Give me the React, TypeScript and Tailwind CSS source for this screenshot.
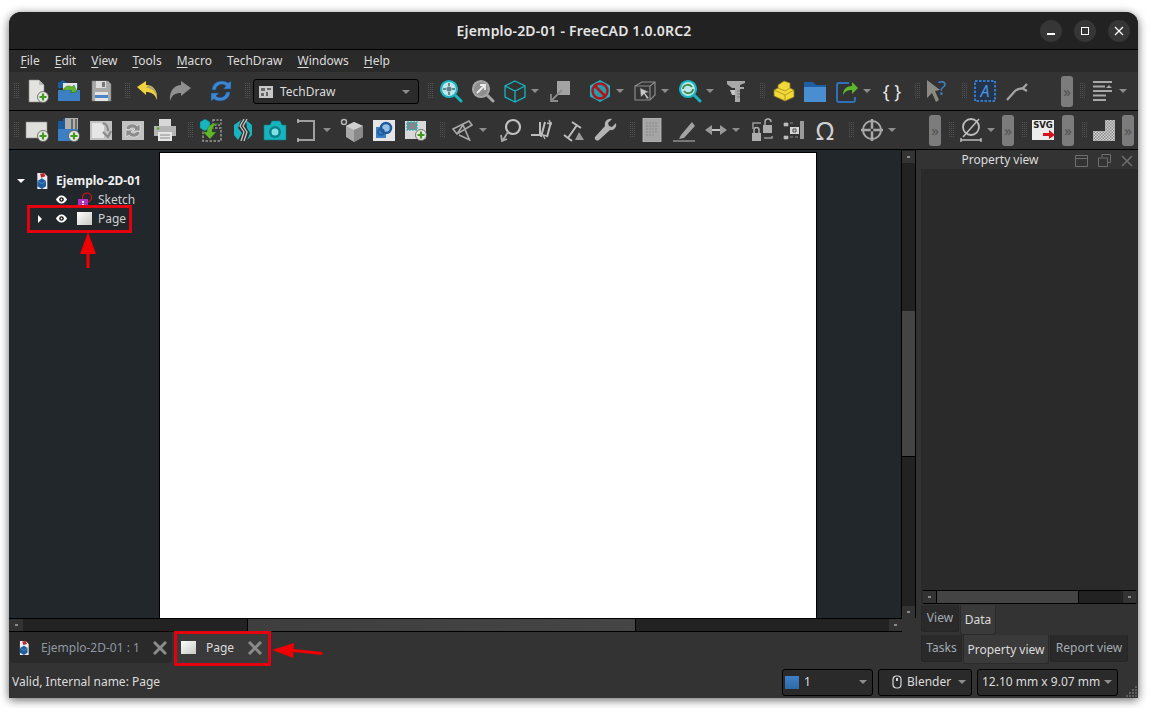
import type { ReactNode } from "react";

const Svg = ({ children, size = 24 }: { children: ReactNode; size?: number }) => (
  <svg width={size} height={size} viewBox="0 0 24 24" fill="none">
    {children}
  </svg>
);

const Plus = ({ x = 18, y = 18 }: { x?: number; y?: number }) => (
  <g>
    <circle cx={x} cy={y} r="5.5" fill="#e8e8e4" stroke="#555" strokeWidth="0.8" />
    <path d={`M${x} ${y - 3.5}v7M${x - 3.5} ${y}h7`} stroke="#3f9a1e" strokeWidth="2.2" />
  </g>
);

// barra 1
const NewDoc = () => (
  <Svg>
    <path d="M4 1h10l5 5v17H4z" fill="#e2e2de" stroke="#8c8c8c" strokeWidth=".6" />
    <path d="M14 1v5h5z" fill="#bdbdb8" />
    <Plus x={18} y={18} />
  </Svg>
);
const OpenDoc = () => (
  <Svg>
    <path d="M1 22V4l5-3 4 3h11v5H1z" fill="#1d5c9c" />
    <path d="M6 4h14v8H6z" fill="#e6e6e6" />
    <path d="M1 11h22v11H1z" fill="#3d7fc4" />
    <path d="M6 12c1-5 6-6 9-4l2-2 3 7-7 1 2-2c-2-2-6-2-9 0z" fill="#5fb82c" stroke="#2f6c10" strokeWidth=".5" />
  </Svg>
);
const Save = () => (
  <Svg>
    <path d="M3 2h16l3 3v17H3z" fill="#a8a8a8" stroke="#777" strokeWidth=".6" />
    <path d="M7 2h10v7H7z" fill="#dcdcdc" />
    <path d="M13 3h3v5h-3z" fill="#777" />
    <path d="M6 13h13v9H6z" fill="#e4e4e4" />
    <path d="M6 16h13v3H6z" fill="#4b86c4" />
  </Svg>
);
const Undo = () => (
  <Svg>
    <path d="M1 8l9-6v4c6 0 12 4 11 15-2-6-6-8-11-8v3z" fill="#efd33c" />
    <path d="M10 9c5 0 10 2 11 12 1-7-3-14-9-14z" fill="#8e8e8e" opacity=".7" />
  </Svg>
);
const Redo = () => (
  <Svg>
    <path d="M23 9l-10-7v4C7 6 1 11 2 22c2-6 5-8 11-8v3z" fill="#8f8f8f" />
  </Svg>
);
const Refresh = () => (
  <Svg>
    <path d="M3 11C3 5 8 2 13 2c3 0 5 1 6 2l3-2v8h-8l3-3c-4-3-10-1-10 4z" fill="#3f86cf" stroke="#17497d" strokeWidth=".6" />
    <path d="M21 13c0 6-5 9-10 9-3 0-5-1-6-2l-3 2v-8h8l-3 3c4 3 10 1 10-4z" fill="#3f86cf" stroke="#17497d" strokeWidth=".6" />
  </Svg>
);
const Lens = ({ c, fill = "#dff3f5", children }: { c: string; fill?: string; children?: ReactNode }) => (
  <Svg>
    <path d="M15 15l7 7" stroke={c} strokeWidth="3" strokeLinecap="round" />
    <circle cx="10" cy="10" r="8" fill={fill} stroke={c} strokeWidth="2.2" />
    {children}
  </Svg>
);
const FitAll = () => (
  <Lens c="#19b5c0" fill="#bfe6ea">
    <circle cx="10" cy="10" r="2.5" fill="#5f7f86" />
    <path d="M10 4v3M10 13v3M4 10h3M13 10h3" stroke="#4a6a70" strokeWidth="1.5" />
  </Lens>
);
const FitSel = () => (
  <Lens c="#a6a6a6" fill="#8f8f8f">
    <path d="M6 14l7-7M9 6h5v5" stroke="#ededed" strokeWidth="1.800" />
  </Lens>
);
const WireCube = () => (
  <Svg>
    <path d="M12 2l10 5v11l-10 5-10-5V7zM2 7l10 5 10-5M12 12v11" stroke="#17b4bf" strokeWidth="1.3" />
  </Svg>
);
const DiagView = () => (
  <Svg>
    <path d="M9 2h13v14H9z" fill="#a3a3a3" />
    <path d="M14 11L4 21M3 15v7h7" stroke="#8a8a8a" strokeWidth="1.800" />
  </Svg>
);
const NoSign = () => (
  <Svg>
    <path d="M12 1l10 5.5v11L12 23 2 17.500v-11z" fill="#19b5c0" />
    <circle cx="12" cy="12" r="7.5" stroke="#b3101b" strokeWidth="2.5" fill="#2a9aa5" />
    <path d="M7 7l10 10" stroke="#b3101b" strokeWidth="2.5" />
  </Svg>
);
const BoxCursor = () => (
  <Svg>
    <path d="M2 7l7-4h13v13l-5 5H2zM2 7h15v14M17 7l5-4" stroke="#8b8b8b" strokeWidth="1.2" />
    <path d="M7 9l9 4-4 1 4 5-2 1-3-5-3 3z" fill="#c8c8c8" stroke="#555" strokeWidth=".5" />
  </Svg>
);
const ZoomRefresh = () => (
  <Lens c="#19b5c0" fill="#bfe6ea">
    <path d="M5 10c0-4 6-6 9-2M15 10c0 4-6 6-9 2" stroke="#3d8a4a" strokeWidth="1.800" />
  </Lens>
);
const Caliper = () => (
  <Svg>
    <path d="M3 2h18v2l-5 2v2h4v2h-4v13h-5V9H8L3 5z" fill="#a8a8a8" />
    <path d="M6 11h5v5H8z" fill="#c4c4c4" />
    <path d="M13 12h3M13 15h3M13 18h3" stroke="#777" />
  </Svg>
);
const Blocks = () => (
  <Svg>
    <path d="M13 2l6 2v5l4 2v7l-9 4-11-5v-6l4-2V6z" fill="#f2d93b" stroke="#8b7a12" strokeWidth=".8" />
    <path d="M3 11l11 5 9-5M7 9l7 3 5-3M14 16v6" stroke="#a38f14" strokeWidth=".8" />
  </Svg>
);
const Folder = () => (
  <Svg>
    <path d="M1 23V3h9l3 3h10v17z" fill="#1e5fa3" />
    <path d="M1 8h22v15H1z" fill="#4a8ed2" />
  </Svg>
);
const Share = () => (
  <Svg>
    <path d="M14 4H4a2 2 0 0 0-2 2v15a2 2 0 0 0 2 2h14a2 2 0 0 0 2-2v-3" stroke="#2d72b8" strokeWidth="2" />
    <path d="M8 16c0-6 4-9 9-9V3l6 6-6 6v-4c-4 0-7 1-9 5z" fill="#5fb82c" />
  </Svg>
);
const WhatsThis = () => (
  <div className="relative h-[24px] w-[24px]">
    <Svg>
      <path d="M1 1l13 10-5 1 4 9-3 2-4-9-5 5z" fill="#8a8a84" />
    </Svg>
    <span className="absolute left-[12px] top-[-3px] text-[19px] leading-[24px] text-[#3f7fc4]">?</span>
  </div>
);
const DottedA = () => (
  <Svg>
    <rect x="2" y="2" width="20" height="20" fill="#23344a" stroke="#3579c9" strokeWidth="2" strokeDasharray="2.500 1.500" />
    <text x="12" y="18" textAnchor="middle" fontSize="16" fontStyle="italic" fill="#4c93e0" fontFamily="Noto Sans, sans-serif">A</text>
  </Svg>
);
const Leader = () => (
  <Svg>
    <path d="M2 21l8-9c3-3 6-2 8-3l4-4M17 9l5 3" stroke="#a3a3a3" strokeWidth="2.300" />
  </Svg>
);
const ListIcon = () => (
  <Svg>
    <path d="M2 3h19M2 7.500h12M2 12h19M2 16.500h13M2 21h13" stroke="#a8a8a8" strokeWidth="2" />
    <path d="M15 9l3-3 3 3z" fill="#a8a8a8" />
  </Svg>
);

// barra 2
const NewPage = () => (
  <Svg>
    <path d="M1 4h21v16H1z" fill="#dededa" stroke="#8a8a8a" strokeWidth=".6" />
    <Plus x={18} y={18} />
  </Svg>
);
const InsertPage = () => (
  <Svg>
    <path d="M1 23V3h5V1h15v12H1z" fill="#1d5c9c" />
    <path d="M8 0h13v12H8z" fill="#b0b0b0" />
    <path d="M14 1h2v10h-2zM18 1h2v10h-2z" fill="#6a6a6a" />
    <path d="M1 11h20v12H1z" fill="#3d7fc4" />
    <Plus x={17} y={18} />
  </Svg>
);
const PageArrow = () => (
  <Svg>
    <path d="M1 3h22v19H1z" fill="#c2c2c2" />
    <path d="M3 5h9l3 3v12H3z" fill="#e6e6e6" />
    <path d="M14 5c4 1 5 4 5 8M14 14l5 5 3-6" stroke="#8a8a8a" strokeWidth="2.200" />
  </Svg>
);
const PageRefresh = () => (
  <Svg>
    <path d="M1 3h22v19H1z" fill="#c2c2c2" />
    <path d="M5 11c0-5 8-7 11-3l3-2v7h-7l2-2c-2-2-5-1-6 1zM19 14c0 5-8 7-11 3l-3 2v-7h7l-2 2c2 2 5 1 6-1z" fill="#8c8c8c" stroke="#eee" strokeWidth=".6" />
  </Svg>
);
const Printer = () => (
  <Svg>
    <path d="M6 1h12v7H6z" fill="#d8d8d8" />
    <path d="M1 8h22v10H1z" fill="#b4b4b4" />
    <circle cx="5" cy="10.500" r="1.300" fill="#53a52b" />
    <path d="M5 14h14v9H5z" fill="#e6e6e6" />
    <path d="M7 17h10M7 20h10" stroke="#888" />
  </Svg>
);
const ImportView = () => (
  <Svg>
    <path d="M4 10h18v13H4z" stroke="#9a9a9a" strokeWidth="1.500" strokeDasharray="2.500 1.500" />
    <path d="M14 2h8v5h-8z" stroke="#9a9a9a" strokeWidth="1.500" strokeDasharray="2 1.500" />
    <path d="M1 4l5-3 5 3v6l-5 3-5-3z" fill="#17b4bf" stroke="#0c6a72" strokeWidth=".5" />
    <path d="M8 14c0-6 5-10 12-8-5 0-7 3-7 8h4l-6 7-7-7z" fill="#5fb82c" stroke="#2f6c10" strokeWidth=".4" />
  </Svg>
);
const Zig = () => (
  <Svg>
    <path d="M3 7l7-5-3 8 4 5-4 7-4-5z" fill="#17b4bf" />
    <path d="M21 7l-6-5 1 8 3 5-3 7 5-5z" fill="#17b4bf" />
    <path d="M13 1l-4 7 4 6-3 9M16 1l-4 7 4 6-3 9" stroke="#c4c4c4" strokeWidth="1.300" />
  </Svg>
);
const Camera = () => (
  <Svg>
    <path d="M1 7h6l2-4h8l2 4h4v15H1z" fill="#17b4bf" stroke="#0d7a82" strokeWidth=".6" />
    <circle cx="12" cy="14" r="6" fill="#0b7f89" />
    <circle cx="12" cy="14" r="3.500" fill="#7fe0e6" />
  </Svg>
);
const Bracket = () => (
  <Svg>
    <path d="M3 3h16v19H3" stroke="#9f9f9f" strokeWidth="2" />
    <path d="M3 1v4M3 20v4" stroke="#bcbcbc" strokeWidth="1.600" />
  </Svg>
);
const GreyCube = () => (
  <Svg>
    <path d="M14 4l9 4v11l-9 5-8-5V8z" fill="#a9a9a9" />
    <path d="M6 8l8 4 9-4-9-4z" fill="#cfcfcf" />
    <path d="M14 12v12l9-5V8z" fill="#8a8a8a" />
    <circle cx="4" cy="4" r="2.500" stroke="#b5b5b5" strokeWidth="1.500" />
  </Svg>
);
const LinkView = () => (
  <Svg>
    <path d="M1 2h22v21H1z" fill="#e6e6e6" />
    <path d="M4 9h10v11H4z" fill="#3d7fc4" />
    <circle cx="14" cy="10" r="5" stroke="#1d5c9c" strokeWidth="2.500" fill="#9bc0e6" />
    <circle cx="9" cy="14" r="3" stroke="#1d5c9c" strokeWidth="1.500" />
  </Svg>
);
const ClipPage = () => (
  <Svg>
    <path d="M1 3h21v18H1z" fill="#d8d8d8" />
    <path d="M3 4h10v8H3z" fill="#7d8a90" stroke="#19b5c0" strokeWidth="1.200" strokeDasharray="2 1" />
    <Plus x={17} y={17} />
  </Svg>
);
const Angled = () => (
  <Svg>
    <path d="M2 11L18 3l3 4L6 16zM6 16l6-9 7 16M8 17l11 5" stroke="#a8a8a8" strokeWidth="1.600" />
  </Svg>
);
const Radius = () => (
  <Svg>
    <circle cx="15" cy="9" r="7" stroke="#c0c0c0" strokeWidth="2.200" />
    <path d="M10 14L5 22M3 17l1 6 5-2" stroke="#a8a8a8" strokeWidth="1.800" />
  </Svg>
);
const Parallel = () => (
  <Svg>
    <path d="M1 17h9V4M15 4l-4 15M21 4l-4 15" stroke="#bdbdbd" strokeWidth="2" />
    <path d="M19 2l2 4-4-1M15 21l-2-4 4 1" stroke="#bdbdbd" strokeWidth="1.300" />
  </Svg>
);
const AnchorDim = () => (
  <Svg>
    <path d="M10 4l9 6M2 17l8 6M15 7L6 20" stroke="#bdbdbd" strokeWidth="2" />
    <path d="M17 14l5 8H13z" fill="#9a9a9a" />
  </Svg>
);
const Wrench = () => (
  <Svg>
    <path d="M22 5l-4 4-3-1-1-3 4-4c-4-1-8 2-7 7L1 19c-1 2 2 5 4 3L16 12c4 1 7-3 6-7z" fill="#b4b4b4" />
  </Svg>
);
const Sheet = () => (
  <Svg>
    <path d="M3 0h18v24H3z" fill="#a5a5a5" stroke="#c0c0c0" strokeWidth=".8" />
    <path d="M6 5h12M6 8h12M6 11h12M6 14h12M6 17h8" stroke="#8a8a8a" strokeWidth="1" strokeDasharray="2 1" />
  </Svg>
);
const Pen = () => (
  <Svg>
    <path d="M9 17l-2 4 5-1L23 8l-3-4z" fill="#a3a3a3" />
    <path d="M1 23h22" stroke="#8f8f8f" strokeWidth="1.500" />
  </Svg>
);
const DoubleArrow = () => (
  <Svg>
    <path d="M1 12l7-5v10zM23 12l-7-5v10z" fill="#9a9a9a" />
    <path d="M8 12h8" stroke="#c4c4c4" strokeWidth="2" />
  </Svg>
);
const LockRefresh = () => (
  <Svg>
    <path d="M2 15h9v8H2z" fill="#adadad" />
    <path d="M4 15v-3a2.500 2.500 0 0 1 5 0v3" stroke="#adadad" strokeWidth="1.500" />
    <path d="M13 7h9v8h-9z" fill="#adadad" />
    <path d="M15 7V4a3 3 0 0 1 6 0" stroke="#adadad" strokeWidth="1.500" />
    <path d="M3 11V5h8M22 18v2h-8" stroke="#9a9a9a" strokeWidth="1.500" />
  </Svg>
);
const Constraints = () => (
  <Svg>
    <path d="M2 5h4v3H2zM2 18h4v3H2zM8 5h3M8 19h3M13 19h3" stroke="#8a8a8a" />
    <path d="M2 5h4v3H2zM2 18h4v3H2z" fill="#bdbdbd" />
    <path d="M18 3h4v18h-4z" fill="#9a9a9a" />
    <path d="M8 9h9v7H8z" fill="#d6d6d6" />
    <path d="M11 11h3v3h-3z" stroke="#444" />
  </Svg>
);
const Crosshair = () => (
  <Svg>
    <circle cx="12" cy="12" r="9" stroke="#a8a8a8" strokeWidth="2" />
    <path d="M12 1v22M1 12h22" stroke="#a8a8a8" strokeWidth="2.500" />
    <circle cx="12" cy="12" r="1.500" fill="#333" />
  </Svg>
);
const Diameter = () => (
  <Svg>
    <circle cx="12" cy="9" r="8" stroke="#bdbdbd" strokeWidth="1.800" />
    <path d="M4 19L20 1M2 22h20M2 20v4M22 20v4" stroke="#bdbdbd" strokeWidth="1.500" />
  </Svg>
);
const SvgExport = () => (
  <Svg>
    <path d="M0 2h22v20H0z" fill="#ececec" />
    <text x="11" y="10" textAnchor="middle" fontSize="8.500" fontWeight="700" fill="#222" fontFamily="DejaVu Sans, sans-serif">SVG</text>
    <path d="M11 15h6v-3l6 5-6 4v-3h-6z" fill="#d8121d" />
  </Svg>
);
const Stairs = () => (
  <Svg>
    <defs>
      <pattern id="hatch" width="3" height="3" patternUnits="userSpaceOnUse">
        <rect width="3" height="3" fill="#d2d2d2" />
        <rect width="1.500" height="1.500" fill="#8c8c8c" />
        <rect x="1.500" y="1.500" width="1.500" height="1.500" fill="#8c8c8c" />
      </pattern>
    </defs>
    <path d="M1 23V13h12V2h10v21z" fill="url(#hatch)" />
  </Svg>
);

const Eye = () => (
  <svg width="11" height="9" viewBox="0 0 11 9">
    <path d="M0 4.500C2 1 4 .5 5.500 .5S9 1 11 4.500C9 8 7 8.500 5.500 8.500S2 8 0 4.500z" fill="#fff" />
    <circle cx="5.500" cy="4.500" r="2.300" fill="#111" />
    <circle cx="5.500" cy="4.500" r=".9" fill="#fff" />
  </svg>
);

const DocIcon = ({ size = 16 }: { size?: number }) => (
  <Svg size={size}>
    <path d="M5 0h10l5 5v19H5z" fill="#eee" />
    <path d="M9 1l6-1 2 5-6 2z" fill="#c9202a" />
    <path d="M5 12l7-4 6 4v8l-6 4-7-4z" fill="#1f5f9f" />
    <path d="M5 12l7 4 6-4" stroke="#6aa0d8" />
  </Svg>
);
const PageIcon = () => <span className="block h-[13px] w-[15px] bg-gradient-to-br from-white to-[#c8c8c4]" />;

const Tri = ({ className = "text-[#8d8d8d]" }: { className?: string }) => (
  <svg width="8" height="4" viewBox="0 0 8 4" className={className}>
    <path d="M0 0h8L4 4z" fill="currentColor" />
  </svg>
);

const Grip = ({ w = "w-[15px]" }: { w?: string }) => (
  <div className={`flex h-full shrink-0 items-center justify-end pr-[2px] ${w}`}>
    <svg width="5" height="16" viewBox="0 0 5 16">
      {[0, 2, 4, 6, 8, 10, 12, 14].map((y) =>
        [0, 2, 4].map((x) => <rect key={`${x}-${y}`} x={x} y={y} width="1" height="1" fill="#525252" />),
      )}
    </svg>
  </div>
);

const Btn = ({ children, className = "" }: { children: ReactNode; className?: string }) => (
  <div className={`flex w-[32px] shrink-0 items-center justify-center ${className}`}>{children}</div>
);

const MenuBtn = ({ children, className = "" }: { children: ReactNode; className?: string }) => (
  <div className={`flex w-[45px] shrink-0 items-center ${className}`}>
    <div className="flex w-[32px] justify-center">{children}</div>
    <Tri />
  </div>
);

const Pill = ({ className = "" }: { className?: string }) => (
  <div className={`flex h-[31px] w-[12px] shrink-0 items-center justify-center overflow-hidden rounded-[3px] bg-[#7c7c7c] text-[15px] leading-none text-[#505050] ${className}`}>
    »
  </div>
);

const VScroll = ({ className = "" }: { className?: string }) => (
  <div className={`flex h-[12px] w-[12px] shrink-0 items-center justify-center bg-[#333] ${className}`}>
    <span className="h-[2px] w-[3px] bg-[#8a8a8a]" />
  </div>
);

const StatusCombo = ({ children, className }: { children: ReactNode; className: string }) => (
  <div className={`flex h-[27px] items-center rounded-[3px] border border-black bg-[#2a2a2a] ${className}`}>{children}</div>
);

const menus = [
  ["F", "ile"],
  ["E", "dit"],
  ["V", "iew"],
  ["T", "ools"],
  ["M", "acro"],
  ["", "TechDraw"],
  ["W", "indows"],
  ["H", "elp"],
];

export default function App() {
  return (
    <div className="relative h-[708px] w-[1150px] overflow-hidden bg-white pl-[9px] pt-[12px] font-['Noto_Sans',sans-serif] text-[12px] text-[#dcdcdc]">
      <div className="flex h-[686px] w-[1129px] flex-col overflow-hidden rounded-t-[12px] bg-[#333333] shadow-[0_2px_10px_rgba(0,0,0,0.6)]">
        {/* Titlebar */}
        <div className="relative flex h-[38px] shrink-0 items-center justify-center border-b border-black bg-[#222222]">
          <span className="ml-px text-[14px] font-semibold tracking-[0.17px] text-[#e4e4e4]">Ejemplo-2D-01 - FreeCAD 1.0.0RC2</span>
          <div className="absolute right-[8px] top-[8px] flex gap-[12px]">
            <div className="flex h-[22px] w-[22px] items-center justify-center rounded-full bg-[#363636]">
              <span className="mt-[6px] h-[1.5px] w-[8px] bg-white" />
            </div>
            <div className="flex h-[22px] w-[22px] items-center justify-center rounded-full bg-[#363636]">
              <span className="h-[8px] w-[8px] border border-white" />
            </div>
            <div className="flex h-[22px] w-[22px] items-center justify-center rounded-full bg-[#363636]">
              <svg width="10" height="10" viewBox="0 0 10 10">
                <path d="M1 1l8 8M9 1l-8 8" stroke="#fff" strokeWidth="1.300" />
              </svg>
            </div>
          </div>
        </div>

        {/* Menu */}
        <div className="flex h-[22px] shrink-0 items-center bg-[#2a2a2a] pl-[4px]">
          {menus.map(([key, rest]) => (
            <span key={rest} className="px-[7.5px] leading-[22px]">
              <span className="underline underline-offset-2">{key}</span>
              {rest}
            </span>
          ))}
        </div>

        {/* Toolbar 1 */}
        <div className="flex h-[39px] shrink-0 items-center border-b border-black bg-[#333333]">
          <Grip w="w-[12px]" />
          <Btn><NewDoc /></Btn>
          <Btn><OpenDoc /></Btn>
          <Btn><Save /></Btn>
          <Grip />
          <Btn><Undo /></Btn>
          <Btn><Redo /></Btn>
          <Btn className="ml-[9px]"><Refresh /></Btn>
          <Grip />
          <div className="ml-px mt-px flex h-[25px] w-[166px] shrink-0 items-center rounded-[3px] border border-black bg-[#2b2b2b] pl-[5px] pr-[8px]">
            <svg width="14" height="12" viewBox="0 0 14 12">
              <path d="M0 0h14v12H0z" fill="#c8c8c8" />
              <path d="M2 2h4v3H2zM8 2h4v2H8zM2 7h3v3H2zM7 6h2v4H7z" fill="#666" />
            </svg>
            <span className="ml-[7px] flex-1">TechDraw</span>
            <Tri />
          </div>
          <Grip w="w-[16px]" />
          <Btn><FitAll /></Btn>
          <Btn><FitSel /></Btn>
          <MenuBtn><WireCube /></MenuBtn>
          <Btn><DiagView /></Btn>
          <MenuBtn className="ml-[8px]"><NoSign /></MenuBtn>
          <MenuBtn><BoxCursor /></MenuBtn>
          <MenuBtn><ZoomRefresh /></MenuBtn>
          <Btn className="ml-px"><Caliper /></Btn>
          <Grip />
          <Btn><Blocks /></Btn>
          <Btn><Folder /></Btn>
          <MenuBtn><Share /></MenuBtn>
          <Btn><span className="text-[18px] leading-none text-[#e8e8e8]">{"{ }"}</span></Btn>
          <Grip w="w-[14px]" />
          <Btn><WhatsThis /></Btn>
          <Grip />
          <Btn><DottedA /></Btn>
          <Btn><Leader /></Btn>
          <Pill className="ml-[28px]" />
          <Grip w="w-[14px]" />
          <MenuBtn><ListIcon /></MenuBtn>
        </div>

        {/* Toolbar 2 */}
        <div className="flex h-[39px] shrink-0 items-center border-b border-black bg-[#333333]">
          <Grip w="w-[12px]" />
          <Btn><NewPage /></Btn>
          <Btn><InsertPage /></Btn>
          <Btn><PageArrow /></Btn>
          <Btn><PageRefresh /></Btn>
          <Btn><Printer /></Btn>
          <Grip w="w-[14px]" />
          <Btn><ImportView /></Btn>
          <Btn><Zig /></Btn>
          <Btn><Camera /></Btn>
          <MenuBtn><Bracket /></MenuBtn>
          <Btn><GreyCube /></Btn>
          <Btn><LinkView /></Btn>
          <Btn><ClipPage /></Btn>
          <Grip />
          <MenuBtn><Angled /></MenuBtn>
          <Btn className="ml-[2px]"><Radius /></Btn>
          <Btn><Parallel /></Btn>
          <Btn><AnchorDim /></Btn>
          <Btn><Wrench /></Btn>
          <Grip />
          <Btn className="-ml-px"><Sheet /></Btn>
          <Btn><Pen /></Btn>
          <MenuBtn><DoubleArrow /></MenuBtn>
          <Btn className="ml-px"><LockRefresh /></Btn>
          <Btn><Constraints /></Btn>
          <Btn className="-ml-px"><span className="text-[25px] leading-none text-[#d0d0d0]">Ω</span></Btn>
          <Grip />
          <MenuBtn><Crosshair /></MenuBtn>
          <Pill className="ml-[28px]" />
          <Grip />
          <MenuBtn className="-ml-px"><Diameter /></MenuBtn>
          <Pill className="ml-[2px]" />
          <Grip />
          <Btn className="-ml-px"><SvgExport /></Btn>
          <Pill className="ml-[2px]" />
          <Grip />
          <Btn className="-ml-px"><Stairs /></Btn>
          <Pill className="ml-[2px]" />
        </div>

        {/* Body */}
        <div className="flex h-[514px] shrink-0">
          <div className="flex w-[907px] shrink-0 flex-col">
            <div className="flex h-[468px] shrink-0">
              {/* Tree */}
              <div className="w-[150px] shrink-0 bg-[#22272b] pt-[21px]">
                <div className="flex h-[19px] items-center pl-[8px]">
                  <Tri className="text-white" />
                  <span className="ml-[9px]"><DocIcon /></span>
                  <span className="ml-[6px] font-bold text-[#f0f0f0]">Ejemplo-2D-01</span>
                </div>
                <div className="flex h-[19px] items-center pl-[47px]">
                  <Eye />
                  <svg width="17" height="16" viewBox="0 0 17 16" className="ml-[10px]">
                    <circle cx="10" cy="5.500" r="4.500" stroke="#e0101a" fill="none" strokeWidth="1.200" />
                    <path d="M1 7h10v9H1z" fill="#b030c0" />
                    <path d="M5 9h2v2H5zM5 12h2v2H5z" fill="#eee" />
                  </svg>
                  <span className="ml-[4px] text-[#d0d0d0]">Sketch</span>
                </div>
                <div className="flex h-[19px] items-center pl-[29px]">
                  <svg width="4" height="8" viewBox="0 0 4 8"><path d="M0 0l4 4-4 4z" fill="#fff" /></svg>
                  <span className="ml-[14px]"><Eye /></span>
                  <span className="ml-[10px]"><PageIcon /></span>
                  <span className="ml-[6px] text-[#d0d0d0]">Page</span>
                </div>
              </div>

              {/* Viewport */}
              <div className="w-[742px] shrink-0 bg-[#22272b] pt-[2px]">
                <div className="h-[466px] w-[658px] border-x border-t border-black bg-white" />
              </div>

              <div className="flex w-[15px] shrink-0 flex-col items-center border-x border-black bg-[#222] pt-[1px]">
                <VScroll className="h-[12px] w-full" />
                <div className="h-[148px] border-b border-black" />
                <div className="h-[146px] w-full border-b border-black bg-[#444444]" />
                <div className="flex-1" />
                <VScroll className="w-full" />
              </div>
            </div>

            <div className="flex h-[14px] w-[893px] shrink-0 items-center border-y border-black bg-[#222222]">
              <VScroll className="w-[14px]" />
              <div className="h-full w-[224px]" />
              <div className="h-full w-[389px] border-x border-black bg-gradient-to-r from-[#3e3e3e] to-[#454545]" />
              <div className="h-full flex-1" />
              <VScroll className="w-[13px]" />
            </div>

            {/* Tabs */}
            <div className="flex h-[32px] items-start">
              <div className="ml-[1px] flex h-[31px] w-[162px] items-center rounded-b-[4px] bg-[#2a2a2a] pl-[7px] text-[#8d99a3]">
                <DocIcon size={14} />
                <span className="ml-[10px]">Ejemplo-2D-01 : 1</span>
                <svg width="14" height="14" viewBox="0 0 14 14" className="ml-[13px]">
                  <path d="M1 1l12 12M13 1L1 13" stroke="#8a8a8a" strokeWidth="3" />
                </svg>
              </div>
              <div className="ml-[5px] flex h-[31px] w-[94px] items-center bg-[#3a3a3a] pl-[4px]">
                <PageIcon />
                <span className="ml-[10px]">Page</span>
                <svg width="14" height="14" viewBox="0 0 14 14" className="ml-[14px]">
                  <path d="M1 1l12 12M13 1L1 13" stroke="#8a8a8a" strokeWidth="3" />
                </svg>
              </div>
            </div>
          </div>

          {/* Property dock */}
          <div className="ml-[5px] flex w-[217px] shrink-0 flex-col">
            <div className="relative flex h-[19px] shrink-0 items-center justify-center pr-[59px]">
              <span>Property view</span>
              <div className="absolute right-[5px] top-[4px] flex items-center gap-[10px] text-[#6e6e6e]">
                <svg width="13" height="12" viewBox="0 0 13 12"><path d="M.5.500h12v11H.5zM.5 3.500h12" stroke="currentColor" fill="none" /></svg>
                <svg width="13" height="13" viewBox="0 0 13 13"><path d="M4 3V.5h8.500v8H10M.5 4h9v8.500h-9z" stroke="currentColor" fill="none" /></svg>
                <svg width="12" height="12" viewBox="0 0 12 12"><path d="M1 1l10 10M11 1L1 11" stroke="currentColor" strokeWidth="1.500" /></svg>
              </div>
            </div>
            <div className="flex h-[435px] shrink-0 flex-col justify-end bg-[#2a2a2a]">
              <div className="ml-[2px] mr-[2px] flex h-[14px] items-center border-y border-black bg-[#222]">
                <VScroll className="w-[13px]" />
                <div className="h-full w-[143px] border-x border-black bg-[#444]" />
                <div className="flex-1" />
                <VScroll className="w-[13px]" />
              </div>
            </div>
            <div className="mt-px flex h-[30px] shrink-0 items-start">
              <div className="flex h-[27px] w-[38px] items-center justify-center rounded-b-[3px] border border-t-0 border-[#262626] bg-[#2a2a2a] text-[#a4acb3]">View</div>
              <div className="ml-px flex h-[30px] w-[36px] items-center justify-center rounded-b-[3px] border border-t-0 border-[#2a2a2a] bg-[#3a3a3a]">Data</div>
            </div>
            <div className="flex h-[29px] shrink-0 items-start">
              <div className="flex h-[27px] w-[41px] items-center justify-center rounded-b-[3px] border border-t-0 border-[#262626] bg-[#2a2a2a] text-[#a4acb3]">Tasks</div>
              <div className="ml-px flex h-[29px] w-[86px] items-center justify-center rounded-b-[3px] border border-t-0 border-[#2a2a2a] bg-[#3a3a3a] pt-px">Property view</div>
              <div className="ml-px flex h-[27px] w-[78px] items-center justify-center rounded-b-[3px] border border-t-0 border-[#262626] bg-[#2a2a2a] text-[#a4acb3]">Report view</div>
            </div>
          </div>
        </div>

        {/* Status bar */}
        <div className="relative flex h-[34px] shrink-0 items-center pl-[3px] pt-[2px]">
          <span className="flex-1">Valid, Internal name: Page</span>
          <StatusCombo className="w-[91px] pl-[2px] pr-[5px]">
            <span className="h-[13px] w-[14px] bg-gradient-to-b from-[#3f80c6] to-[#2f69a8]" />
            <span className="ml-[5px] flex-1">1</span>
            <Tri />
          </StatusCombo>
          <StatusCombo className="ml-[5px] w-[94px] pl-[13px] pr-[5px]">
            <svg width="10" height="14" viewBox="0 0 10 14">
              <rect x="1" y="1" width="8" height="12" rx="3.500" stroke="#d8d8d8" fill="none" strokeWidth="1.200" />
              <path d="M4 3h2v3H4z" fill="#d8d8d8" />
            </svg>
            <span className="ml-[5px] flex-1">Blender</span>
            <Tri />
          </StatusCombo>
          <StatusCombo className="ml-[5px] w-[141px] pl-[4px] pr-[5px]">
            <span className="flex-1">12.10 mm x 9.07 mm</span>
            <Tri />
          </StatusCombo>
          <div className="w-[20px]" />
          <svg width="13" height="13" viewBox="0 0 13 13" className="absolute bottom-0 right-0">
            {[[10, 1], [7, 4], [10, 4], [4, 7], [7, 7], [10, 7], [1, 10], [4, 10], [7, 10], [10, 10]].map(([x, y]) => (
              <rect key={`${x}-${y}`} x={x} y={y} width="2" height="2" fill="#5e5e5e" />
            ))}
          </svg>
        </div>
      </div>

      {/* Red annotations */}
      <div className="absolute left-[27px] top-[205px] h-[28px] w-[105px] border-[3px] border-[#e3000f]" />
      <div className="absolute left-[174px] top-[631px] h-[35px] w-[97px] border-[3px] border-[#e3000f]" />
      <svg width="20" height="40" viewBox="0 0 20 40" className="absolute left-[78px] top-[230px]">
        <path d="M10 2l8 22h-6.500v14h-3V24H2z" fill="#f00000" />
      </svg>
      <svg width="54" height="20" viewBox="0 0 54 20" className="absolute left-[271px] top-[640px]">
        <path d="M1 10l22-7-.5 6 29 3-.3 3-29-3 .3 6z" fill="#f00000" />
      </svg>
    </div>
  );
}
